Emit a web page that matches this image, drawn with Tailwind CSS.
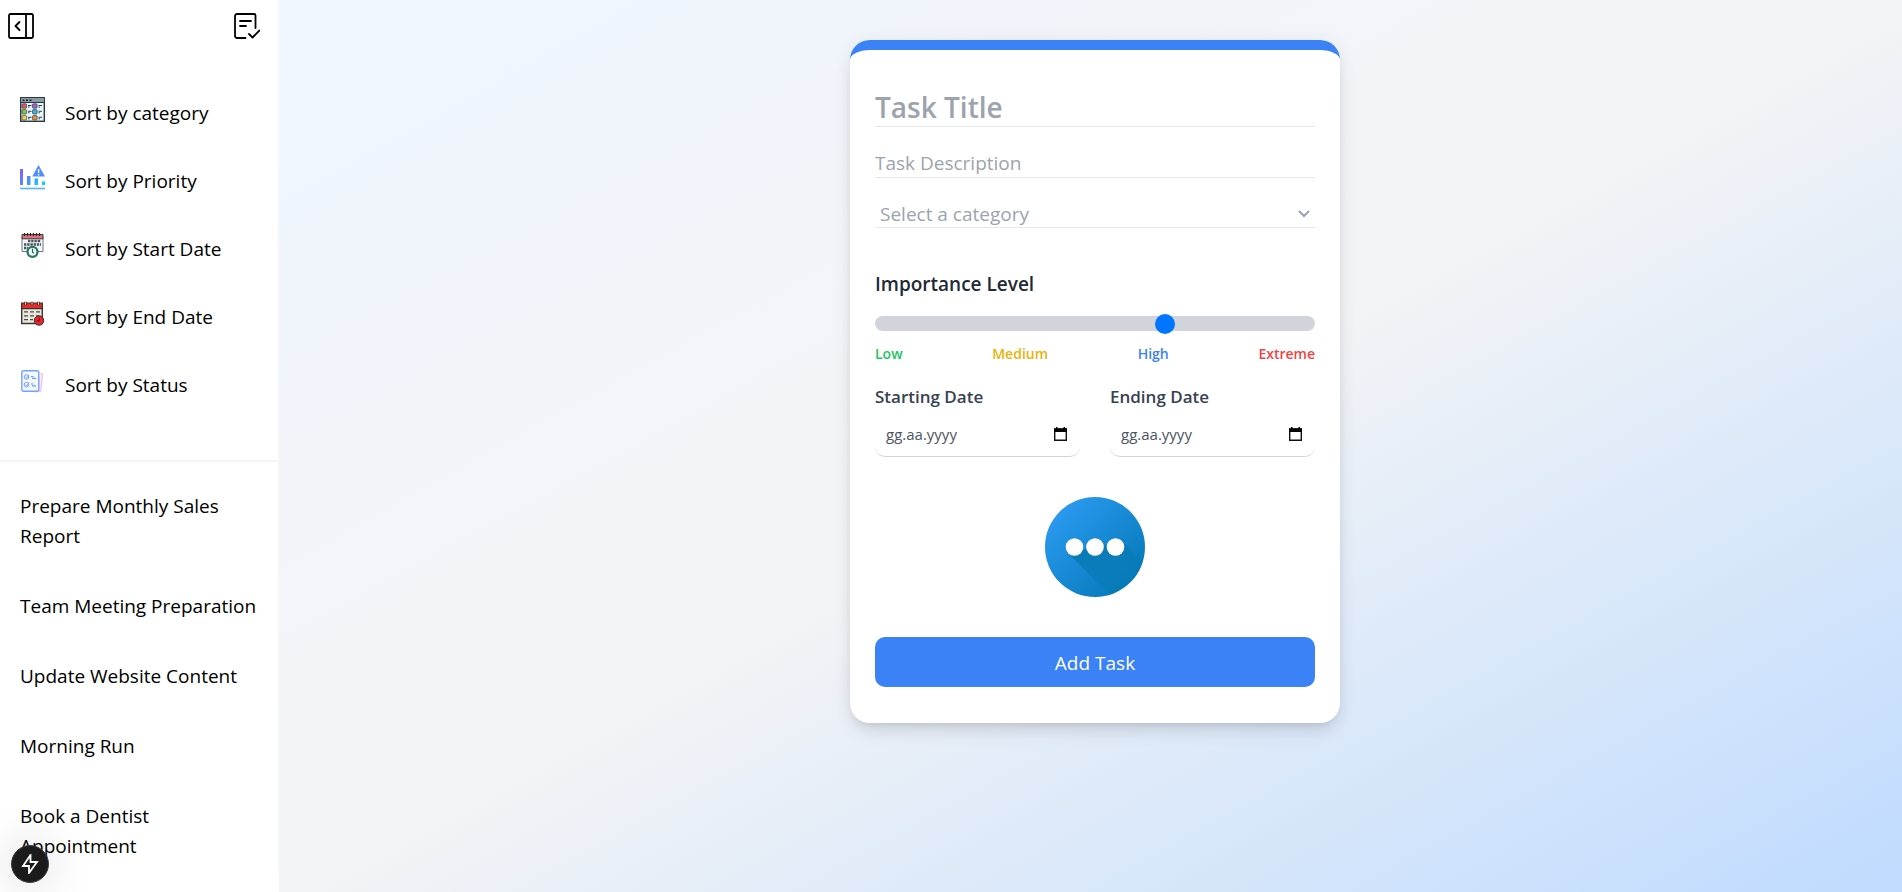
<!DOCTYPE html>
<html lang="en">
<head>
<meta charset="utf-8">
<meta name="viewport" content="width=device-width, initial-scale=1">
<title>Task planner</title>
<script src="https://cdn.jsdelivr.net/npm/@tailwindcss/browser@4"></script>
</head>
<body class="flex min-h-screen font-['Open_Sans','Noto_Sans',sans-serif] text-[19px] leading-[30px] text-black">

<aside class="w-[279px] shrink-0 bg-white">
  <div class="border-r-2 border-[#f9fafb]">
    <div class="flex items-center justify-between py-[13px] pr-[17px] pl-2">
      <button type="button" aria-label="Collapse sidebar">
        <svg class="size-[26px]" viewBox="0 0 26 26" fill="none" stroke="#000" stroke-width="1.800" stroke-linecap="round" stroke-linejoin="round"><rect x="1" y="1" width="24" height="24" rx="1.5"/><path d="M18 1v24M11.500 9 7.500 13l4 4"/></svg>
      </button>
      <button type="button" aria-label="Task list">
        <svg class="size-[26px]" viewBox="0 0 26 26" fill="none" stroke="#000" stroke-width="1.800" stroke-linecap="round" stroke-linejoin="round"><path d="M11.500 25H3a2 2 0 0 1-2-2V3a2 2 0 0 1 2-2h17a1.500 1.500 0 0 1 1.500 1.500V15M6 8h11M6 13h6M15 21l3.500 3.500 7-7"/></svg>
      </button>
    </div>

    <nav aria-label="Sorting" class="border-b-2 border-gray-100 pt-[45px] pb-[60px]">
      <ul class="flex flex-col gap-[37px] pl-5">
        <li><button type="button" class="flex items-start gap-5">
          <svg class="size-[25px]" viewBox="0 0 25 25"><rect x=".7" y=".7" width="23.600" height="23.600" fill="#e4f5fb" stroke="#2b3a42" stroke-width="1.400"/><path d="M1 1h23v4.500H1z" fill="#8b9ba3"/><path d="M1 5.500h23" stroke="#2b3a42"/><path d="M2.500 3.200h2M6 3.200h2M9.500 3.200h2" stroke="#222" stroke-width="1.500"/><g stroke="#34404a" stroke-width=".7"><rect x="2" y="6.800" width="4.600" height="4.400" rx="1" fill="#ef5360"/><rect x="12.500" y="6.800" width="4.600" height="4.400" rx="1" fill="#a95fc9"/><rect x="2" y="12.600" width="4.600" height="4.400" rx="1" fill="#8bc53f"/><rect x="12.500" y="12.600" width="4.600" height="4.400" rx="1" fill="#36b5dc"/><rect x="2" y="18.600" width="4.600" height="4.400" rx="1" fill="#f7d34c"/><rect x="12.500" y="18.600" width="4.600" height="4.400" rx="1" fill="#f28a2e"/></g><path d="M8 8.500h3.500M8 10h1.500M18.500 8.500H22M18.500 10H20M8 14.300h3.500M8 15.800h1.500M18.500 14.300H22M18.500 15.800H20M8 20.300h3.500M8 21.800h1.500M18.500 20.300H22M18.500 21.800H20" stroke="#34404a"/></svg>
          <span class="pt-px">Sort by category</span></button></li>
        <li><button type="button" class="flex items-start gap-5">
          <svg class="size-[25px]" viewBox="0 0 25 25"><defs><linearGradient id="bars" gradientUnits="userSpaceOnUse" x1="0" y1="0" x2="25" y2="16"><stop stop-color="#9055ff"/><stop offset=".5" stop-color="#518ef8"/><stop offset="1" stop-color="#00d5ff"/></linearGradient></defs><g fill="url(#bars)"><path d="M0 4h3v16H0zM7 11h3.500v9H7zM14.500 13.500H18V20h-3.500zM22 16.500h3V20h-3z"/></g><path d="M18.500 0 25 11.500H12.300z" fill="#4c8dff"/><path d="M18.600 4v4M18.600 9v1.500" stroke="#fff" stroke-width="1.400"/><path d="M0 23.500h25" stroke="#55b4ff" stroke-width="1.600"/></svg>
          <span class="pt-px">Sort by Priority</span></button></li>
        <li><button type="button" class="flex items-start gap-5">
          <svg class="size-[25px]" viewBox="0 0 25 25"><path d="M2 4h21v14.500H2z" fill="#f4f7fa" stroke="#6c7780"/><path d="M2 1.500h21v4.300H2z" fill="#e36f78" stroke="#383e45"/><path d="M4.500 0v3M7.500 0v3M10.500 0v3M13.500 0v3M16.500 0v3M19.500 0v3" stroke="#222" stroke-width="1.200"/><path d="M8 8h13M4 11.500h17M4 15h4" stroke="#4a525a" stroke-width="2.600" stroke-dasharray="2.400 .8"/><circle cx="12.500" cy="18.800" r="5" fill="#f5fbfa" stroke="#237a63" stroke-width="2.300"/><path d="M12.500 15.800v3.400l1.600 1" fill="none" stroke="#355" stroke-width="1.200"/></svg>
          <span class="pt-px">Sort by Start Date</span></button></li>
        <li><button type="button" class="flex items-start gap-5">
          <svg class="size-[25px]" viewBox="0 0 25 25"><path d="M1.700 3h20.600v19.500H1.700z" fill="#e6e9dc" stroke="#3d3434" stroke-width="1.400"/><path d="M1.700 2h20.600v5.600H1.700z" fill="#e82b2d" stroke="#3d3030" stroke-width="1.200"/><path d="M5.500.8v3.500M12 .8v3.500M18.500.8v3.500" stroke="#3d3030" stroke-width="2.600"/><path d="M5.500 1.200v2.400M12 1.200v2.400M18.500 1.200v2.400" stroke="#ffe28a"/><path d="M4 10.800h4M10 10.800h4M16 10.800h4M4 14.800h4M10 14.800h4M16 14.800h3M4 18.600h4M10 18.600h3" stroke="#4c4848" stroke-width="1.300"/><circle cx="19" cy="19.500" r="4.700" fill="#e5252a" stroke="#4a2525"/><path d="M19.500 16.800v3h-3" fill="none" stroke="#5c1616"/></svg>
          <span class="pt-px">Sort by End Date</span></button></li>
        <li><button type="button" class="flex items-start gap-5">
          <svg class="size-[25px]" viewBox="0 0 25 25" fill="none"><path d="M20 4.500l2.700.5-2 17.500-7.500.2" fill="#fbe9f6" stroke="#f6c6e6" stroke-width="1.300"/><rect x="1.800" y="1.800" width="17" height="20.400" rx="2" fill="#f3f8ff" stroke="#75a1ff" stroke-width="1.400"/><circle cx="6.500" cy="8" r="2.300" stroke="#7d9dff"/><circle cx="6.500" cy="15.700" r="2.300" stroke="#7d9dff"/><path d="m5.500 8 1.200 1L9 6M5.500 15.700l1.200 1L9 13.700" stroke="#7d9dff"/><path d="M11 7.500h2.500M12 9.300h4M11 15h2.500M12 16.800h4" stroke="#639bff" stroke-width="1.200"/></svg>
          <span class="pt-px">Sort by Status</span></button></li>
      </ul>
    </nav>

    <ul class="flex flex-col gap-10 pt-[29px] pr-4 pb-[9px] pl-5">
      <li><a href="#">Prepare Monthly Sales Report</a></li>
      <li><a href="#">Team Meeting Preparation</a></li>
      <li><a href="#">Update Website Content</a></li>
      <li><a href="#">Morning Run</a></li>
      <li><a href="#">Book a Dentist Appointment</a></li>
    </ul>
  </div>
</aside>

<main class="flex flex-1 items-start justify-center bg-linear-to-br/srgb from-[#eff6ff] via-[#f3f4f6] to-[#bfdbfe] pt-10 pl-[9px]">
  <form class="w-[490px] rounded-[20px] border-t-[10px] border-[#3b82f6] bg-white px-[25px] pt-[34px] pb-9 shadow-[0_12px_19px_-4px_rgb(0_0_0/0.1),0_5px_8px_-5px_rgb(0_0_0/0.1),0_0_20px_rgb(0_0_0/0.06)]">
    <input type="text" aria-label="Task title" placeholder="Task Title" class="block h-[43px] w-full border-b border-[#e5e7eb] pt-[3px] text-[28px] leading-10 font-semibold outline-none placeholder:text-[#9ca3af]">
    <input type="text" aria-label="Task description" placeholder="Task Description" class="mt-5 block h-[31px] w-full border-b border-[#e5e7eb] pt-px outline-none placeholder:text-[#9ca3af]">
    <div class="relative mt-5">
      <select aria-label="Category" class="block h-[30px] w-full appearance-none border-b border-[#e5e7eb] bg-white pt-px pl-[5px] text-[#9ca3af] outline-none">
        <option>Select a category</option>
      </select>
      <svg class="pointer-events-none absolute top-[12px] right-[5px] h-2 w-3" viewBox="0 0 12 8" fill="none" stroke="#9ca3af" stroke-width="2"><path d="m1 1 5 5 5-5"/></svg>
    </div>

    <label for="importance" class="mt-[41px] block font-semibold text-[#1f2937]">Importance Level</label>
    <input id="importance" type="range" min="0" max="3" value="2" class="mt-[17px] block h-[15px] w-full appearance-none rounded-full bg-[#d1d5db] [&::-webkit-slider-thumb]:size-5 [&::-webkit-slider-thumb]:appearance-none [&::-webkit-slider-thumb]:rounded-full [&::-webkit-slider-thumb]:bg-[#0075ff]">
    <div class="mt-[10px] flex justify-between text-[14px] leading-[25px] font-semibold">
      <span class="text-[#22c55e]">Low</span>
      <span class="text-[#eab308]">Medium</span>
      <span class="text-[#3b82f6]">High</span>
      <span class="text-[#ef4444]">Extreme</span>
    </div>

    <div class="mt-4 grid grid-cols-2 gap-[30px]">
      <div>
        <label for="start" class="block text-[17px] leading-[30px] font-semibold text-[#374151]">Starting Date</label>
        <div class="mt-1 flex h-[41px] items-center rounded-[10px] border-b border-[#d1d5db] px-[11px] pb-1">
          <input id="start" type="text" placeholder="gg.aa.yyyy" class="min-w-0 flex-1 text-[15px] leading-5 outline-none placeholder:text-[#4b5563]">
          <button type="button" aria-label="Pick starting date"><svg class="mr-[2px] h-[14px] w-[13px]" viewBox="0 0 13 14"><path d="M.700 2h11.600v11.300H.700z" fill="none" stroke="#111" stroke-width="1.400"/><path d="M0 1.500h13V5H0zM2 0h1.500v2H2zM9.500 0H11v2H9.500z" fill="#000"/></svg></button>
        </div>
      </div>
      <div>
        <label for="end" class="block text-[17px] leading-[30px] font-semibold text-[#374151]">Ending Date</label>
        <div class="mt-1 flex h-[41px] items-center rounded-[10px] border-b border-[#d1d5db] px-[11px] pb-1">
          <input id="end" type="text" placeholder="gg.aa.yyyy" class="min-w-0 flex-1 text-[15px] leading-5 outline-none placeholder:text-[#4b5563]">
          <button type="button" aria-label="Pick ending date"><svg class="mr-[2px] h-[14px] w-[13px]" viewBox="0 0 13 14"><path d="M.700 2h11.600v11.300H.700z" fill="none" stroke="#111" stroke-width="1.400"/><path d="M0 1.500h13V5H0zM2 0h1.500v2H2zM9.500 0H11v2H9.500z" fill="#000"/></svg></button>
        </div>
      </div>
    </div>

    <button type="button" aria-label="Choose task icon" class="mx-auto mt-10 block size-[100px]">
      <svg class="size-[100px]" viewBox="0 0 100 100">
        <defs>
          <linearGradient id="disc" x1=".15" y1=".15" x2=".85" y2=".85"><stop stop-color="#2998ee"/><stop offset="1" stop-color="#077bbb"/></linearGradient>
          <linearGradient id="shade" x1="0" y1="0" x2="1" y2="1"><stop stop-color="#0577b0"/><stop offset="1" stop-color="#0577b0" stop-opacity="0"/></linearGradient>
          <clipPath id="round"><circle cx="50" cy="50" r="50"/></clipPath>
        </defs>
        <circle cx="50" cy="50" r="50" fill="url(#disc)"/>
        <path d="M23 56 68 101h40V74L77 44z" fill="url(#shade)" clip-path="url(#round)"/>
        <g fill="#fff"><circle cx="29.500" cy="50" r="8.800"/><circle cx="50" cy="50" r="8.800"/><circle cx="70.500" cy="50" r="8.800"/></g>
      </svg>
    </button>

    <button type="submit" class="mt-10 block h-[50px] w-full rounded-[10px] bg-[#3b82f6] pt-px text-white">Add Task</button>
  </form>
</main>

<button type="button" aria-label="Developer tools" class="fixed bottom-[9px] left-[11px] flex size-[38px] items-center justify-center rounded-full border border-[#3c3c3e] bg-[#1b1b1c] shadow-[0_0_48px_rgb(0_0_0/0.2)]">
  <svg class="size-5" viewBox="0 0 20 20" fill="none" stroke="#fff" stroke-width="1.800" stroke-linejoin="miter"><path d="M10.500 1 3 12h6v7l8-11h-6.500z"/></svg>
</button>
</body>
</html>
